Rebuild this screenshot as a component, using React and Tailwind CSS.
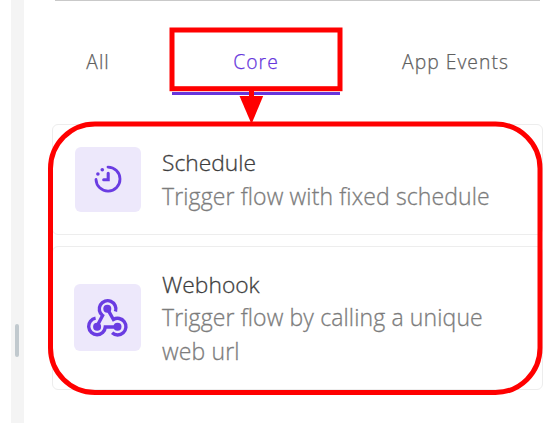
const PURPLE = '#6a3ce2';

function ScheduleIcon() {
  return (
    <svg className="h-[28px] w-[28px]" viewBox="0 0 28 28" fill="none" stroke={PURPLE} strokeWidth="2.8">
      <path d="M14 2.1A12 12 0 1 1 2 14.5" strokeLinecap="round" />
      <path d="M14.2 8.2V14.7H9.7" strokeWidth="3.1" strokeLinecap="round" />
      <circle cx="8.3" cy="4.7" r="1.8" fill={PURPLE} stroke="none" />
      <circle cx="3.9" cy="9" r="1.8" fill={PURPLE} stroke="none" />
    </svg>
  );
}

function WebhookIcon() {
  return (
    <svg className="h-[40px] w-[42px]" viewBox="0.6 0 42 40" fill="none" stroke={PURPLE} strokeWidth="3.4">
      <path d="M29.1 13.4A8.3 8.3 0 1 0 16.2 17.6L10.7 28" />
      <path d="M9.2 20.2A8.3 8.3 0 1 0 18.9 29H31" />
      <path d="M25.7 34.8A8.3 8.3 0 1 0 27 21.5L20.9 10.6" />
      <g fill={PURPLE} stroke="none">
        <circle cx="20.9" cy="10.8" r="4" />
        <circle cx="10.7" cy="28.8" r="4" />
        <circle cx="31.1" cy="28.8" r="4" />
      </g>
    </svg>
  );
}

function Tab({ label, className }) {
  return (
    <div className={`flex h-[95px] shrink-0 items-center justify-center border-b-[3px] pt-[33px] text-[19.3px] tracking-[1.05px] [-webkit-text-stroke:0.25px_currentColor] ${className}`}>
      {label}
    </div>
  );
}

function Card({ icon, title, text, className }) {
  return (
    <div className={`flex w-[491px] items-center rounded-md border border-[#ededed] bg-white ${className}`}>
      {icon}
      <div className="leading-[33.5px] [-webkit-text-stroke:0.3px_currentColor]">
        <div className="text-[22.8px] text-[#3d3d3d]">{title}</div>
        <div className="w-[350px] text-[23px] tracking-[0.13px] text-[#7c7c7c]">{text}</div>
      </div>
    </div>
  );
}

export default function App() {
  return (
    <div className="relative flex h-[423px] w-[560px] overflow-hidden bg-white font-['Open_Sans','Noto_Sans',sans-serif] font-light">
      <div className="ml-[10.5px] flex w-[13.5px] shrink-0 flex-col items-center bg-[#f4f4f4]">
        <div className="mt-[324px] h-[33px] w-[4px] rounded-full bg-[#c1c9ce]" />
      </div>
      <div className="flex w-[536px] shrink-0 flex-col">
        <div className="ml-[31px] h-px w-[485px] shrink-0 bg-[#c9c9c9]" />
        <div className="-mt-px flex">
          <Tab label="All" className="w-[148px] border-transparent text-[#606060]" />
          <Tab label="Core" className="w-[168px] border-[#6636dc] text-[#6636dc]" />
          <Tab label="App Events" className="w-[231px] border-transparent text-[#606060]" />
        </div>
        <div className="mt-[29px] ml-[28px] flex flex-col gap-[11px]">
          <Card
            icon={
              <div className="mr-[21px] mb-px flex h-[65px] w-[66px] shrink-0 items-center justify-center rounded-md bg-[#ede8fb]">
                <ScheduleIcon />
              </div>
            }
            title="Schedule"
            text="Trigger flow with fixed schedule"
            className="h-[111px] pl-[22px]"
          />
          <Card
            icon={
              <div className="mr-[21px] mb-px flex h-[67px] w-[67px] shrink-0 items-center justify-center rounded-md bg-[#ede8fb]">
                <WebhookIcon />
              </div>
            }
            title="Webhook"
            text="Trigger flow by calling a unique web url"
            className="h-[144px] pl-[21px]"
          />
        </div>
      </div>
      <svg className="pointer-events-none absolute inset-0 h-[423px] w-[560px]" viewBox="0 0 560 423" fill="none" stroke="#ff0000" strokeWidth="5">
        <rect x="172" y="30" width="168" height="58.7" />
        <path d="M251.5 89V98" />
        <path d="M239.5 96H263.2L251.5 124Z" fill="#ff0000" stroke="none" />
        <rect x="50.5" y="124" width="489.5" height="268.5" rx="44.5" />
      </svg>
    </div>
  );
}
